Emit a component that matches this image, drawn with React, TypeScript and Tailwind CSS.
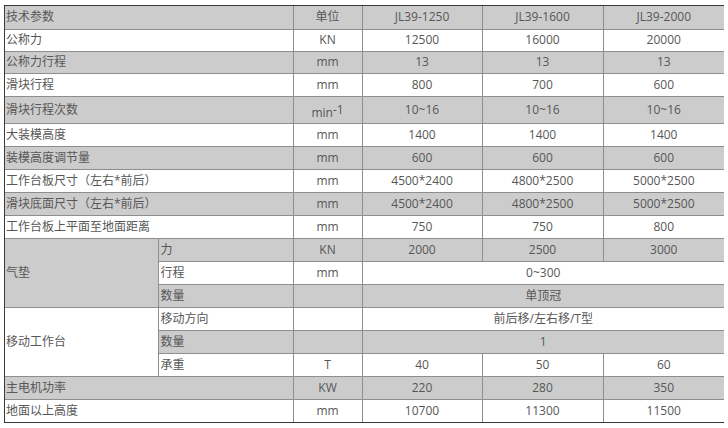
import React from "react";

const G = "bg-[#cccccc]";
const W = "bg-white";

type Row = {
  name: string;
  unit: React.ReactNode;
  vals: string[];
  bg: string;
  h?: string;
};

const topRows: Row[] = [
  { name: "技术参数", unit: "单位", vals: ["JL39-1250", "JL39-1600", "JL39-2000"], bg: G },
  { name: "公称力", unit: "KN", vals: ["12500", "16000", "20000"], bg: W, h: "h-[22px]" },
  { name: "公称力行程", unit: "mm", vals: ["13", "13", "13"], bg: G, h: "h-[22px]" },
  { name: "滑块行程", unit: "mm", vals: ["800", "700", "600"], bg: W },
  {
    name: "滑块行程次数",
    unit: (
      <span className="relative top-[3px]">
        min<sup className="text-[12px] relative top-[-3px]">-1</sup>
      </span>
    ),
    vals: ["10~16", "10~16", "10~16"],
    bg: G,
    h: "h-[27px]",
  },
  { name: "大装模高度", unit: "mm", vals: ["1400", "1400", "1400"], bg: W },
  { name: "装模高度调节量", unit: "mm", vals: ["600", "600", "600"], bg: G },
  { name: "工作台板尺寸（左右*前后）", unit: "mm", vals: ["4500*2400", "4800*2500", "5000*2500"], bg: W },
  { name: "滑块底面尺寸（左右*前后）", unit: "mm", vals: ["4500*2400", "4800*2500", "5000*2500"], bg: G },
  { name: "工作台板上平面至地面距离", unit: "mm", vals: ["750", "750", "800"], bg: W },
];

const bottomRows: Row[] = [
  { name: "主电机功率", unit: "KW", vals: ["220", "280", "350"], bg: G },
  { name: "地面以上高度", unit: "mm", vals: ["10700", "11300", "11500"], bg: W },
];

const td = "border border-[#8e8e8e] p-0 align-middle";

function PlainRow({ r }: { r: Row }) {
  const h = r.h ?? "h-[23px]";
  return (
    <tr className={r.bg}>
      <td colSpan={2} className={`${td} ${h} pl-[1px] text-left`}>
        {r.name}
      </td>
      <td className={`${td} text-center`}>{r.unit}</td>
      {r.vals.map((v, i) => (
        <td key={i} className={`${td} text-center`}>
          {v}
        </td>
      ))}
    </tr>
  );
}

export default function App() {
  const c = `${td} h-[23px] text-center`;
  const sub = `${td} h-[23px] pl-[2px] text-left`;
  return (
    <div className="w-[728px] h-[428px] bg-white pt-[5px] pl-[4px]">
      <div
        className="w-[720px] border border-[#3a3a3a] text-[12px] text-[#575757]"
        style={{ fontFamily: '"Open Sans", "Noto Sans CJK SC", sans-serif' }}
      >
        <table className="w-full table-fixed border-collapse border-hidden">
          <colgroup>
            <col className="w-[153px]" />
            <col className="w-[135px]" />
            <col className="w-[69px]" />
            <col className="w-[120px]" />
            <col className="w-[121px]" />
            <col className="w-[121px]" />
          </colgroup>
          <tbody>
            {topRows.map((r) => (
              <PlainRow key={r.name} r={r} />
            ))}

            {/* 气垫 */}
            <tr className={G}>
              <td rowSpan={3} className={`${td} pl-[1px] text-left ${G}`}>
                气垫
              </td>
              <td className={sub}>力</td>
              <td className={c}>KN</td>
              <td className={c}>2000</td>
              <td className={c}>2500</td>
              <td className={c}>3000</td>
            </tr>
            <tr className={W}>
              <td className={sub}>行程</td>
              <td className={c}>mm</td>
              <td colSpan={3} className={c}>0~300</td>
            </tr>
            <tr className={G}>
              <td className={sub}>数量</td>
              <td className={c}></td>
              <td colSpan={3} className={c}>单顶冠</td>
            </tr>

            {/* 移动工作台 */}
            <tr className={W}>
              <td rowSpan={3} className={`${td} pl-[1px] text-left ${W}`}>
                移动工作台
              </td>
              <td className={sub}>移动方向</td>
              <td className={c}></td>
              <td colSpan={3} className={c}>前后移/左右移/T型</td>
            </tr>
            <tr className={G}>
              <td className={sub}>数量</td>
              <td className={c}></td>
              <td colSpan={3} className={c}>1</td>
            </tr>
            <tr className={W}>
              <td className={sub}>承重</td>
              <td className={c}>T</td>
              <td className={c}>40</td>
              <td className={c}>50</td>
              <td className={c}>60</td>
            </tr>

            {bottomRows.map((r) => (
              <PlainRow key={r.name} r={r} />
            ))}
          </tbody>
        </table>
      </div>
    </div>
  );
}
